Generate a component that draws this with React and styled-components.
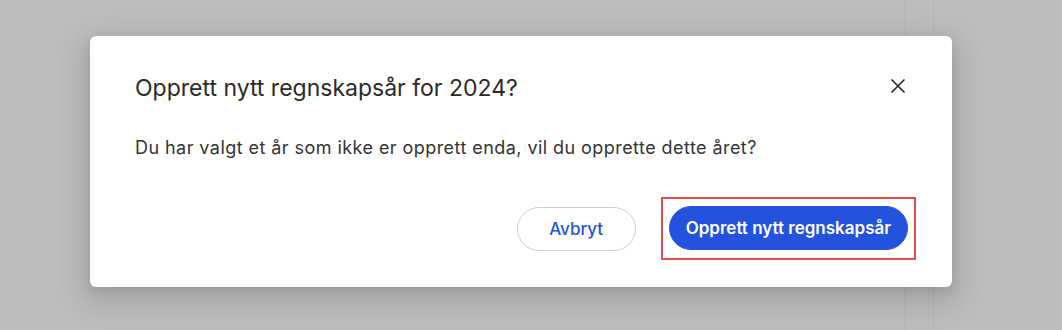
import React from "react";
import styled, { createGlobalStyle } from "styled-components";

const GlobalStyle = createGlobalStyle`
  html, body {
    margin: 0;
    padding: 0;
    background: #bebebe;
    font-family: Inter, "Noto Sans", sans-serif;
  }
`;

const Page = styled.div`
  position: relative;
  width: 1062px;
  height: 330px;
  overflow: hidden;
  display: flex;
`;

const MainArea = styled.div`
  flex: 1;
`;

const SideRail = styled.div`
  width: 27px;
  margin-right: 128px;
  border-left: 1px solid #b0b4b8;
  border-right: 1px solid #b4b6b8;
`;

const Overlay = styled.div`
  position: absolute;
  left: 90px;
  top: 36px;
`;

const Modal = styled.div`
  width: 862px;
  height: 251px;
  box-sizing: border-box;
  background: #ffffff;
  border-radius: 6px;
  padding: 38px 36px 0 45px;
  box-shadow: 0 10px 30px 10px rgba(0, 0, 0, 0.12), 0 4px 10px rgba(0, 0, 0, 0.1);
`;

const Header = styled.div`
  display: flex;
  align-items: center;
  justify-content: space-between;
  padding-right: 10px;
`;

const Title = styled.h2`
  margin: 0;
  font-size: 23px;
  line-height: 28px;
  font-weight: 400;
  color: #2a2a2a;
`;

const CloseButton = styled.button`
  border: 0;
  background: none;
  padding: 0;
  display: flex;
  color: #2a2a2a;
  cursor: pointer;
  margin-top: -4px;
`;

const Body = styled.p`
  margin: 34px 0 0;
  font-size: 18px;
  letter-spacing: 0.44px;
  line-height: 24px;
  color: #333333;
`;

const Footer = styled.div`
  margin-top: 37px;
  display: flex;
  justify-content: flex-end;
  align-items: center;
  gap: 25px;
`;

const Button = styled.button`
  height: 44px;
  box-sizing: border-box;
  border-radius: 22px;
  font-family: Inter, "Noto Sans", sans-serif;
  font-size: 17px;
  font-weight: ${(p) => (p.$primary ? 600 : 500)};
  cursor: pointer;
  padding: 0 16px;
  min-width: ${(p) => (p.$primary ? "auto" : "119px")};
  border: 1px solid ${(p) => (p.$primary ? "#2353dd" : "#cfcfcf")};
  background: ${(p) => (p.$primary ? "#2353dd" : "#ffffff")};
  color: ${(p) => (p.$primary ? "#ffffff" : "#2353dd")};
`;

const Highlight = styled.div`
  border: 2px solid #e14c4c;
  padding: 7px 6px 8px;
  display: flex;
`;

const CloseIcon = () => (
  <svg width="16" height="16" viewBox="0 0 16 16" fill="none">
    <path d="M2 2L14 14M14 2L2 14" stroke="currentColor" strokeWidth="1.7" strokeLinecap="round" />
  </svg>
);

export default function App() {
  return (
    <>
      <GlobalStyle />
      <Page>
        <MainArea />
        <SideRail />
        <Overlay>
          <Modal>
            <Header>
              <Title>Opprett nytt regnskapsår for 2024?</Title>
              <CloseButton aria-label="Lukk">
                <CloseIcon />
              </CloseButton>
            </Header>
            <Body>Du har valgt et år som ikke er opprett enda, vil du opprette dette året?</Body>
            <Footer>
              <Button>Avbryt</Button>
              <Highlight>
                <Button $primary>Opprett nytt regnskapsår</Button>
              </Highlight>
            </Footer>
          </Modal>
        </Overlay>
      </Page>
    </>
  );
}
